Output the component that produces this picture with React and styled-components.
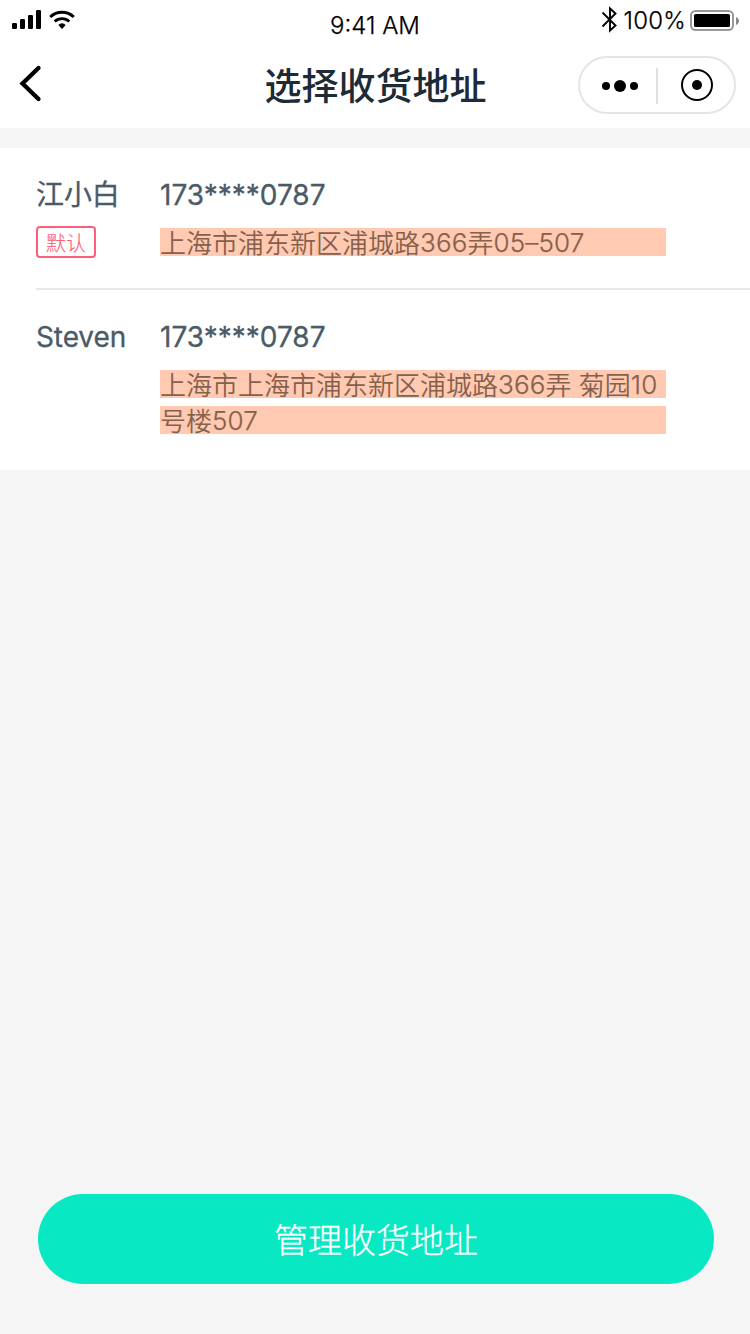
import React from "react";
import styled, { createGlobalStyle } from "styled-components";

const latin = `Inter, "Noto Sans CJK SC", sans-serif`;

const GlobalStyle = createGlobalStyle`
  * { box-sizing: border-box; }
  body { margin: 0; background: #f5f5f5; font-family: ${latin}; }
  p, h1 { margin: 0; }
`;

const Page = styled.div`
  display: flex;
  flex-direction: column;
  width: 750px;
  height: 1334px;
  background: #f5f5f5;
`;

const StatusBar = styled.header`
  display: grid;
  grid-template-columns: 1fr auto 1fr;
  height: 40px;
  padding: 0 11px 0 12px;
  background: #fff;
  color: #000;
`;

const StatusGroup = styled.div`
  display: flex;
  align-items: flex-start;
  justify-content: ${(p) => (p.$end ? "flex-end" : "flex-start")};
  svg { display: block; flex: none; }
`;

const StatusText = styled.span`
  font-size: 24px;
  font-weight: 300;
  line-height: 30px;
  white-space: nowrap;
  letter-spacing: ${(p) => p.$spacing || "0"};
  margin: ${(p) => p.$margin || "0"};
  -webkit-text-stroke: 0.25px #000;
`;

const NavBar = styled.nav`
  display: grid;
  grid-template-columns: 1fr auto 1fr;
  height: 88px;
  padding: 0 14px 0 18px;
  background: #fff;
`;

const BackButton = styled.button`
  width: 30px;
  height: 40px;
  margin: 23px 0 0;
  padding: 0;
  border: 0;
  background: none;
  svg { display: block; }
`;

const Title = styled.h1`
  color: #1c2b36;
  font: 500 37px/52px "Noto Sans CJK SC", sans-serif;
  margin: 18px 3px 0 0;
`;

const Capsule = styled.div`
  justify-self: end;
  display: flex;
  width: 158px;
  height: 58px;
  margin-top: 16px;
  border: 2px solid #e5e5e5;
  border-radius: 29px;
  svg { display: block; }
`;

const AddressList = styled.main`
  margin-top: 20px;
  padding-left: 36px;
  background: #fff;
`;

const AddressItem = styled.section`
  display: grid;
  grid-template-columns: 124px 506px;
  height: ${(p) => p.$height}px;
  padding-top: 26px;
  border-top: ${(p) => (p.$divided ? "2px solid #e8e8e8" : "0")};
`;

const Contact = styled.div`
  display: flex;
  flex-direction: column;
  align-items: flex-start;
`;

const Name = styled.p`
  height: 40px;
  color: #4a5a66;
  font-size: 28px;
  font-weight: 400;
  line-height: 42px;
  letter-spacing: ${(p) => p.$spacing || "0"};
  white-space: nowrap;
  -webkit-text-stroke: 0.3px #4a5a66;
`;

const DefaultTag = styled.span`
  width: 60px;
  height: 32px;
  margin-top: 12px;
  border: 2px solid #fb5f7a;
  border-radius: 4px;
  color: #fb5f7a;
  font: 300 20px/29px "Noto Sans CJK SC", sans-serif;
  text-align: center;
  -webkit-text-stroke: 0.15px #fb5f7a;
`;

const AddressLines = styled.div`
  display: flex;
  flex-direction: column;
  gap: 8px;
  margin-top: 14px;
`;

const AddressLine = styled.p`
  height: 28px;
  background: #ffcab1;
  color: #87604c;
  font-size: 26px;
  font-weight: 350;
  line-height: 31px;
  white-space: pre;
`;

const Digits = styled.span`
  letter-spacing: 0.15px;
  vertical-align: 1px;
  line-height: 1;
  -webkit-text-stroke: 0.25px #87604c;
`;

const Footer = styled.footer`
  margin-top: auto;
  padding: 0 36px 50px 38px;
`;

const ManageButton = styled.button`
  display: block;
  width: 100%;
  height: 90px;
  padding: 0 0 1px;
  border: 0;
  border-radius: 45px;
  background: #07e8c3;
  color: #fff;
  font: 300 34px/50px "Noto Sans CJK SC", sans-serif;
  -webkit-text-stroke: 0.3px #fff;
`;

const SignalIcon = () => (
  <svg width="30" height="30" viewBox="0 0 30 30">
    <rect x="0" y="23" width="5" height="6" rx="1.2" />
    <rect x="8" y="19" width="5" height="10" rx="1.2" />
    <rect x="16" y="15" width="5" height="14" rx="1.2" />
    <rect x="24" y="10" width="5" height="19" rx="1.2" />
  </svg>
);

const WifiIcon = () => (
  <svg width="40" height="30" viewBox="0 0 40 30">
    <path d="M8.200 17a17.300 17.300 0 0 1 23.600 0" fill="none" stroke="#000" strokeWidth="3" />
    <path d="M12.700 21.600a10.600 10.600 0 0 1 14.600 0" fill="none" stroke="#000" strokeWidth="2.800" />
    <path d="M16.300 25a5.600 5.600 0 0 1 7.400 0L20 28.900z" />
  </svg>
);

const BluetoothIcon = () => (
  <svg width="18" height="34" viewBox="0 0 18 34">
    <path d="M1.500 12.500 14.500 25.500 9 30.500V8.500l5.500 5L1.500 26.500" fill="none" stroke="#000" strokeWidth="1.900" />
  </svg>
);

const BatteryIcon = () => (
  <svg width="49" height="32" viewBox="0 0 49 32">
    <rect x="1" y="11" width="42" height="19" rx="4.500" fill="none" stroke="#999" strokeWidth="2" />
    <rect x="4" y="14" width="36" height="13" rx="1.500" />
    <path d="M46 17c4 1.500 4 6.500 0 8z" fill="#888" />
  </svg>
);

const ADDRESSES = [
  {
    name: "江小白",
    phone: "173****0787",
    isDefault: true,
    lines: [["上海市浦东新区浦城路", "366", "弄", "05–507"]],
  },
  {
    name: "Steven",
    phone: "173****0787",
    lines: [
      ["上海市上海市浦东新区浦城路", "366", "弄", " ", "菊园", "10"],
      ["号楼", "507"],
    ],
  },
];

export default function App() {
  return (
    <>
      <GlobalStyle />
      <Page>
        <StatusBar>
          <StatusGroup>
            <SignalIcon />
            <WifiIcon />
          </StatusGroup>
          <StatusText $margin="11px 1px 0 0">9:41 AM</StatusText>
          <StatusGroup $end>
            <BluetoothIcon />
            <StatusText $margin="6px 4px 0 5px" $spacing="0.2px">100%</StatusText>
            <BatteryIcon />
          </StatusGroup>
        </StatusBar>
        <NavBar>
          <BackButton aria-label="返回">
            <svg width="30" height="40" viewBox="0 0 30 40">
              <path d="M20.500 5 4.500 20.500l16 15.500" fill="none" stroke="#000" strokeWidth="4.300" strokeLinecap="round" />
            </svg>
          </BackButton>
          <Title>选择收货地址</Title>
          <Capsule>
            <svg width="154" height="54" viewBox="0 0 154 54">
              <circle cx="26" cy="28" r="4" />
              <circle cx="40" cy="28" r="6" />
              <circle cx="54" cy="28" r="4" />
              <path d="M77 10v36" stroke="#e0e0e0" strokeWidth="2" />
              <circle cx="117" cy="27" r="15" fill="none" stroke="#000" strokeWidth="2" />
              <circle cx="117" cy="27" r="5" />
            </svg>
          </Capsule>
        </NavBar>
        <AddressList>
          {ADDRESSES.map((item, index) => (
            <AddressItem
              key={item.name}
              $divided={index > 0}
              $height={index > 0 ? 182 : 140}
            >
              <Contact>
                <Name $spacing="-0.1px">{item.name}</Name>
                {item.isDefault && <DefaultTag>默认</DefaultTag>}
              </Contact>
              <div>
                <Name>{item.phone}</Name>
                <AddressLines>
                  {item.lines.map((parts) => (
                    <AddressLine key={parts[0]}>
                      {parts.map((part, i) =>
                        /^[\d–]+$/.test(part) ? <Digits key={i}>{part}</Digits> : part
                      )}
                    </AddressLine>
                  ))}
                </AddressLines>
              </div>
            </AddressItem>
          ))}
        </AddressList>
        <Footer>
          <ManageButton>管理收货地址</ManageButton>
        </Footer>
      </Page>
    </>
  );
}
